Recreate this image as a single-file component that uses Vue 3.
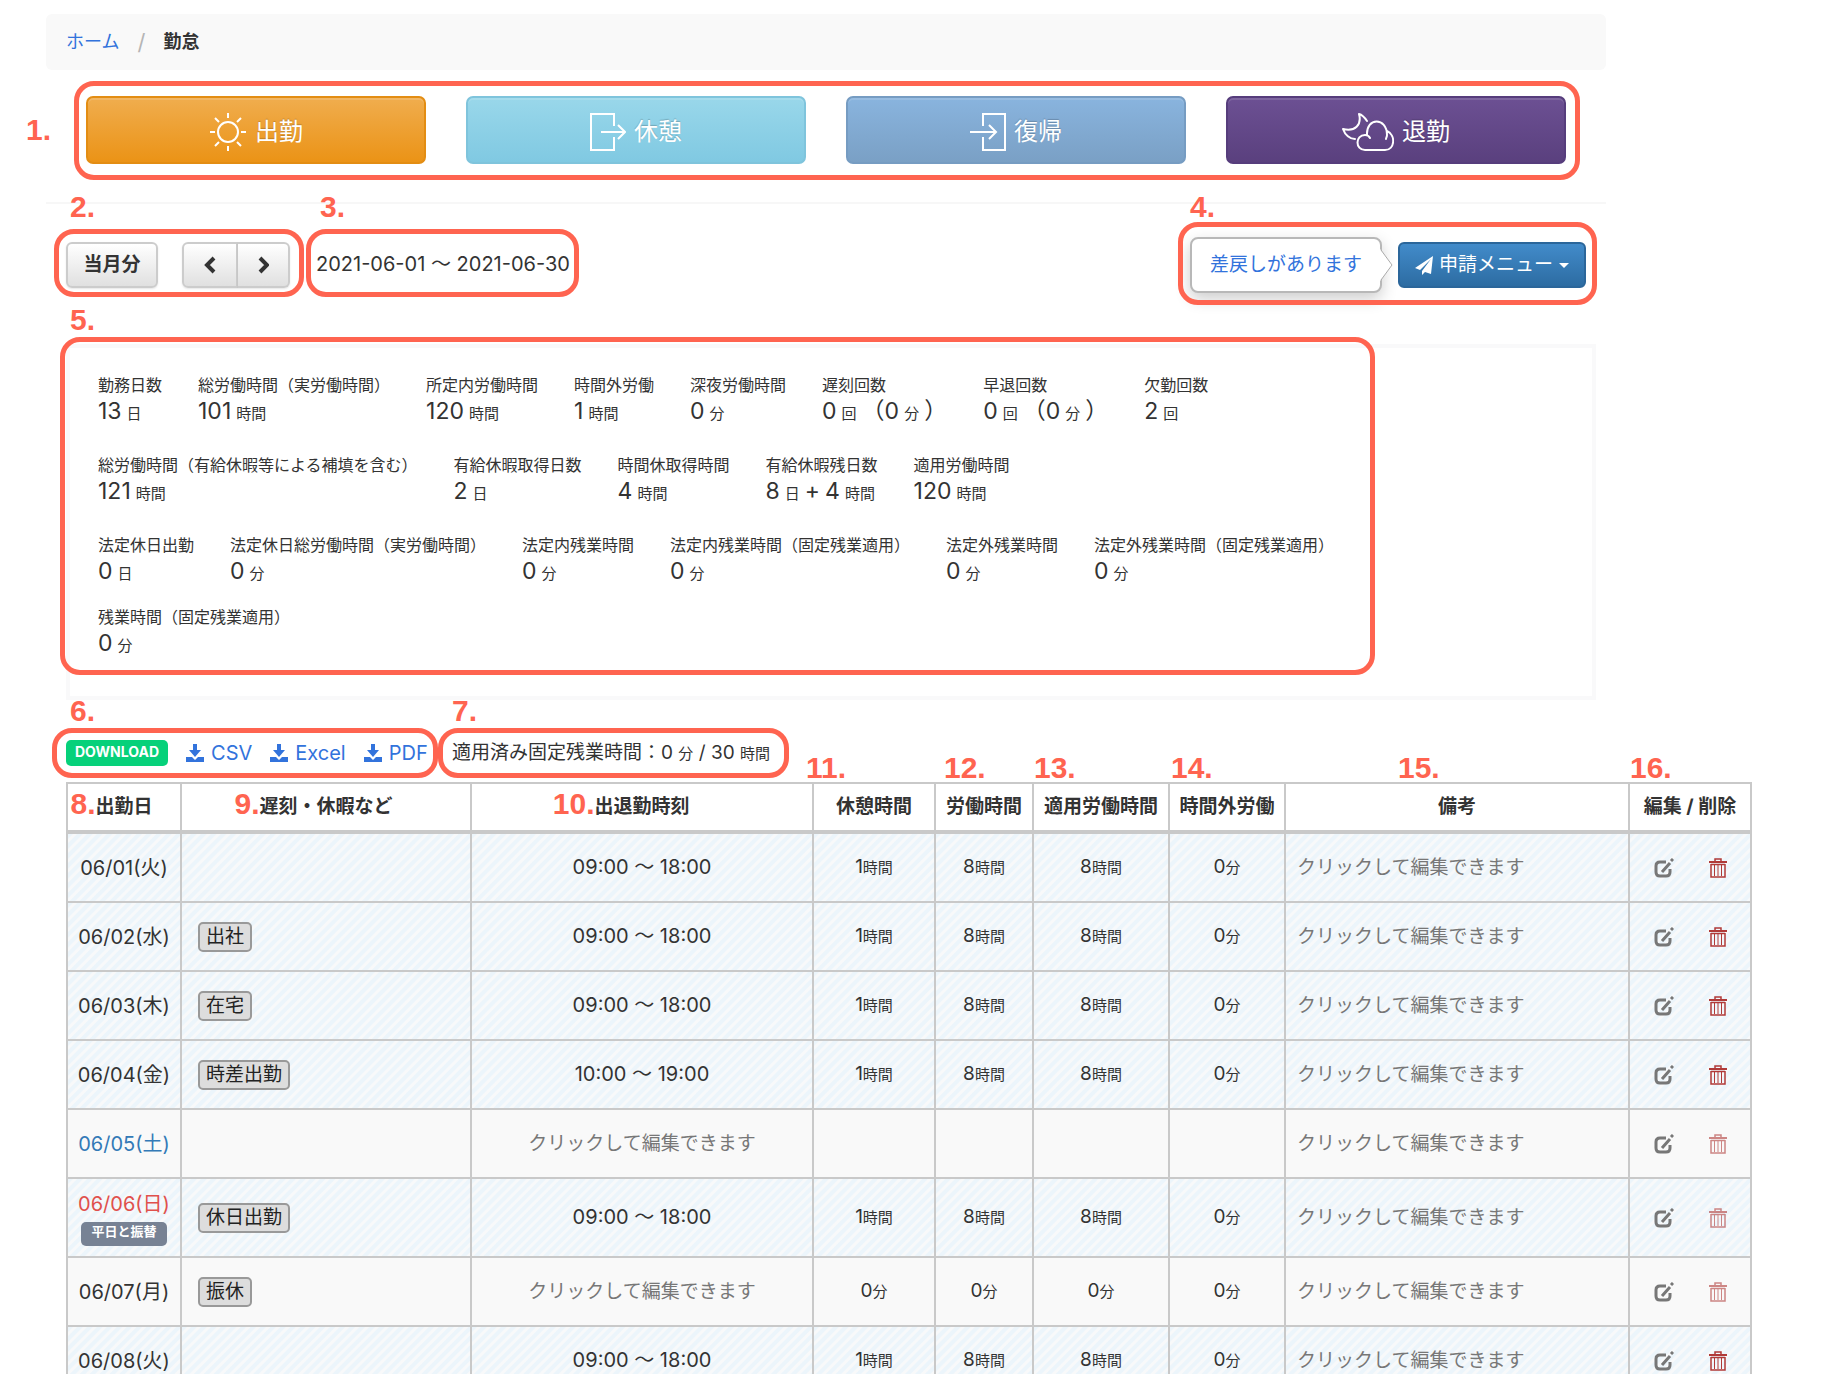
<script setup>
const punches = [
  { key: 'in', label: '出勤' },
  { key: 'break', label: '休憩' },
  { key: 'back', label: '復帰' },
  { key: 'out', label: '退勤' },
]

const n = (v) => ({ t: 'n', v })
const u = (v) => ({ t: 'u', v })

const statGroups = [
  [
    { label: '勤務日数', value: [n('13'), u('日')] },
    { label: '総労働時間（実労働時間）', value: [n('101'), u('時間')] },
    { label: '所定内労働時間', value: [n('120'), u('時間')] },
    { label: '時間外労働', value: [n('1'), u('時間')] },
    { label: '深夜労働時間', value: [n('0'), u('分')] },
    { label: '遅刻回数', value: [n('0'), u('回'), n('（0'), u('分'), n('）')] },
    { label: '早退回数', value: [n('0'), u('回'), n('（0'), u('分'), n('）')] },
    { label: '欠勤回数', value: [n('2'), u('回')] },
  ],
  [
    { label: '総労働時間（有給休暇等による補填を含む）', value: [n('121'), u('時間')] },
    { label: '有給休暇取得日数', value: [n('2'), u('日')] },
    { label: '時間休取得時間', value: [n('4'), u('時間')] },
    { label: '有給休暇残日数', value: [n('8'), u('日'), n('+'), n('4'), u('時間')] },
    { label: '適用労働時間', value: [n('120'), u('時間')] },
  ],
  [
    { label: '法定休日出勤', value: [n('0'), u('日')] },
    { label: '法定休日総労働時間（実労働時間）', value: [n('0'), u('分')] },
    { label: '法定内残業時間', value: [n('0'), u('分')] },
    { label: '法定内残業時間（固定残業適用）', value: [n('0'), u('分')] },
    { label: '法定外残業時間', value: [n('0'), u('分')] },
    { label: '法定外残業時間（固定残業適用）', value: [n('0'), u('分')] },
    { label: '残業時間（固定残業適用）', value: [n('0'), u('分')] },
  ],
]

const downloads = ['CSV', 'Excel', 'PDF']

const columns = [
  { label: '出勤日', mark: '8.', inline: true },
  { label: '遅刻・休暇など', mark: '9.', inline: true },
  { label: '出退勤時刻', mark: '10.', inline: true },
  { label: '休憩時間', mark: '11.', left: -8 },
  { label: '労働時間', mark: '12.', left: 8 },
  { label: '適用労働時間', mark: '13.', left: 0 },
  { label: '時間外労働', mark: '14.', left: 1 },
  { label: '備考', mark: '15.', left: 112 },
  { label: '編集 / 削除', mark: '16.', left: 0 },
]

const worked = [['1', '時間'], ['8', '時間'], ['8', '時間'], ['0', '分']]
const zero = [['0', '分'], ['0', '分'], ['0', '分'], ['0', '分']]
const blank = [null, null, null, null]

const days = [
  { date: '06/01(火)', time: '09:00 ～ 18:00', hours: worked, on: true },
  { date: '06/02(水)', tag: '出社', time: '09:00 ～ 18:00', hours: worked, on: true },
  { date: '06/03(木)', tag: '在宅', time: '09:00 ～ 18:00', hours: worked, on: true },
  { date: '06/04(金)', tag: '時差出勤', time: '10:00 ～ 19:00', hours: worked, on: true },
  { date: '06/05(土)', kind: 'sat', hours: blank, locked: true },
  { date: '06/06(日)', kind: 'sun', note: '平日と振替', tag: '休日出勤', time: '09:00 ～ 18:00', hours: worked, on: true, locked: true },
  { date: '06/07(月)', tag: '振休', hours: zero, locked: true },
  { date: '06/08(火)', time: '09:00 ～ 18:00', hours: worked, on: true },
]
</script>

<template>
  <main class="page">
    <div class="top">
      <nav class="breadcrumb">
        <a href="#">ホーム</a>
        <span class="slash">/</span>
        <strong>勤怠</strong>
      </nav>

      <div class="punches">
        <button v-for="p in punches" :key="p.key" type="button" class="punch" :class="p.key">
          <svg v-if="p.key === 'in'" width="38" height="38" viewBox="0 0 38 38" fill="none" stroke="#fff" stroke-width="2">
            <circle cx="19" cy="19" r="10" />
            <path d="M19 0v5M19 33v5M1 19h5M32 19h5M6 5l4 4M32 5l-4 4M6 33l4-4M32 33l-4-4" />
          </svg>
          <svg v-else-if="p.key === 'break'" width="36" height="38" viewBox="0 0 36 38" fill="none" stroke="#fff" stroke-width="2">
            <path d="M24 13V1H1v36h23V24M11 19h24M28 12l7 7l-7 7" />
          </svg>
          <svg v-else-if="p.key === 'back'" width="36" height="38" viewBox="0 0 36 38" fill="none" stroke="#fff" stroke-width="2">
            <path d="M13 13V1h22v36H13V24M0 19h26M19 12l7 7l-7 7" />
          </svg>
          <svg v-else width="52" height="38" viewBox="0 0 52 38" fill="none" stroke="#fff" stroke-width="2" stroke-linecap="round" stroke-linejoin="round">
            <path d="M25 8C23 5 21 2 17 1C20 12 13 19 1 16C3 22 8 26 13 26" />
            <path d="M23 37C13 37 13 22 23 22C25 22 27 23 28 25M25 22C24 4 45 4 45 22C45 24 44 25 44 26M45 18C54 22 53 37 43 37H23" />
          </svg>
          {{ p.label }}
        </button>
        <i class="ring ring-punch"></i>
        <b class="mark mark-1">1.</b>
      </div>

      <hr />

      <div class="toolbar">
        <div class="period">
          <button type="button" class="btn month">当月分</button>
          <div class="group">
            <button type="button" class="btn" aria-label="前の月">
              <svg width="12" height="18" viewBox="0 0 12 18"><path d="M10 2L3 9l7 7" fill="none" stroke="#333" stroke-width="4" /></svg>
            </button>
            <button type="button" class="btn" aria-label="次の月">
              <svg width="12" height="18" viewBox="0 0 12 18"><path d="M3 2l7 7l-7 7" fill="none" stroke="#333" stroke-width="4" /></svg>
            </button>
          </div>
          <i class="ring ring-period"></i>
          <b class="mark">2.</b>
        </div>
        <div class="range">
          2021-06-01 ～ 2021-06-30
          <i class="ring ring-range"></i>
          <b class="mark">3.</b>
        </div>
        <div class="requests">
          <div class="popover">
            <a href="#">差戻しがあります</a>
            <svg class="tip" width="14" height="32" viewBox="0 0 14 32"><path d="M0 0v32L13 16z" fill="#fff" /><path d="M1 1l11 15L1 31" fill="none" stroke="#aaa" stroke-width="1" /></svg>
          </div>
          <button type="button" class="menu">
            <svg width="18" height="19" viewBox="0 0 18 19" fill="#fff"><path d="M18 0L0 12l5 2L16 3L7 15v4l3-3l6 2z" /></svg>
            申請メニュー
            <span class="caret"></span>
          </button>
          <i class="ring ring-requests"></i>
          <b class="mark mark-4">4.</b>
        </div>
      </div>

      <section class="panel">
        <dl v-for="(g, gi) in statGroups" :key="gi" class="stats">
          <div v-for="s in g" :key="s.label" class="stat">
            <dt>{{ s.label }}</dt>
            <dd><span v-for="(p, i) in s.value" :key="i" :class="{ unit: p.t === 'u' }">{{ p.v }}</span></dd>
          </div>
        </dl>
        <i class="ring ring-panel"></i>
        <b class="mark mark-5">5.</b>
      </section>
    </div>

    <div class="sheet">
      <div class="exports">
        <div class="files">
          <span class="badge">DOWNLOAD</span>
          <a v-for="d in downloads" :key="d" href="#">
            <svg width="18" height="18" viewBox="0 0 18 18" fill="#3273dc"><path d="M7 0h4v6h4l-6 7l-6-7h4zM0 13h6l3 3l3-3h6v5H0z" /></svg>
            {{ d }}
          </a>
          <i class="ring ring-files"></i>
          <b class="mark">6.</b>
        </div>
        <div class="overtime">
          適用済み固定残業時間：0 <span class="unit">分</span> / 30 <span class="unit">時間</span>
          <i class="ring ring-overtime"></i>
          <b class="mark">7.</b>
        </div>
      </div>

      <table>
        <colgroup>
          <col class="c-date" /><col class="c-tag" /><col class="c-time" /><col class="c-rest" /><col class="c-work" />
          <col class="c-applied" /><col class="c-over" /><col /><col class="c-act" />
        </colgroup>
        <thead>
          <tr>
            <th v-for="c in columns" :key="c.label" scope="col">
              <span class="head"><b v-if="c.inline" class="mark lead">{{ c.mark }}</b>{{ c.label }}</span>
              <b v-if="!c.inline" class="mark above" :style="{ left: c.left + 'px' }">{{ c.mark }}</b>
            </th>
          </tr>
        </thead>
        <tbody>
          <tr v-for="d in days" :key="d.date" :class="{ on: d.on, tall: d.note }">
            <td class="clock">
              <span :class="d.kind">{{ d.date }}</span>
              <span v-if="d.note" class="swap">{{ d.note }}</span>
            </td>
            <td class="tags"><span v-if="d.tag" class="tag">{{ d.tag }}</span></td>
            <td>
              <span v-if="d.time" class="clock">{{ d.time }}</span>
              <button v-else type="button" class="hint">クリックして編集できます</button>
            </td>
            <td v-for="(h, i) in d.hours" :key="i"><template v-if="h">{{ h[0] }}<span class="unit">{{ h[1] }}</span></template></td>
            <td class="memo"><button type="button" class="hint">クリックして編集できます</button></td>
            <td>
              <div class="acts">
                <button type="button" aria-label="編集">
                  <svg width="20" height="20" viewBox="0 0 20 20" fill="none" stroke="#777" stroke-width="3">
                    <path d="M12 4H6Q2 4 2 8v6q0 4 4 4h6q4 0 4-4v-3" /><path d="M8 14l8-9M17 3l2-2" />
                  </svg>
                </button>
                <button type="button" aria-label="削除" :class="{ dim: d.locked }">
                  <svg width="18" height="20" viewBox="0 0 18 20" fill="none" stroke="#b03a38">
                    <path d="M0 4h18" stroke-width="2" /><path d="M6 3V1h6v2M2 6v13h14V6M2 6.5h14" stroke-width="1.5" /><path d="M5.5 7v11M9 7v11M12.5 7v11" stroke-width="1" />
                  </svg>
                </button>
              </div>
            </td>
          </tr>
        </tbody>
      </table>
    </div>
  </main>
</template>

<style>
body {
  background: #fff;
}
</style>

<style scoped>
.page {
  box-sizing: border-box;
  height: 100vh;
  overflow: hidden;
  padding: 14px 70px 0 46px;
  font-family: Inter, "Noto Sans CJK JP", sans-serif;
  font-size: 19px;
  line-height: 28px;
  color: #333;
}
button {
  font: inherit;
  color: inherit;
  cursor: pointer;
}
a {
  color: #3273dc;
  text-decoration: none;
}
.top {
  margin-right: 146px;
}
.breadcrumb {
  display: flex;
  align-items: center;
  gap: 18px;
  height: 56px;
  padding: 0 20px;
  border-radius: 6px;
  background: #f9f9f9;
  font-size: 18px;
}
.slash {
  color: #b5b5b5;
  font-size: 22px;
}

/* callout rings and numbers */
.ring {
  position: absolute;
  border: 5px solid #ff6450;
  border-radius: 20px;
  pointer-events: none;
}
.mark {
  position: absolute;
  font: bold 30px/30px "Liberation Sans", sans-serif;
  color: #ff6450;
  left: 4px;
  top: -52px;
}

.punches {
  position: relative;
  display: grid;
  grid-template-columns: repeat(4, 1fr);
  gap: 40px;
  margin: 26px 40px 0;
}
.punch {
  display: flex;
  align-items: center;
  justify-content: center;
  gap: 8px;
  height: 68px;
  padding: 3px 0 0;
  border: 2px solid;
  border-radius: 7px;
  color: #fff;
  font-size: 24px;
  text-shadow: 0 -1px 1px rgba(0, 0, 0, 0.2);
  box-shadow: inset 0 2px 0 rgba(255, 255, 255, 0.13);
}
.in {
  background: linear-gradient(#f0ad4e, #eb9316);
  border-color: #e38d13;
}
.break {
  background: linear-gradient(#99d7ea, #80c9e2);
  border-color: #7fc4dc;
}
.back {
  background: linear-gradient(#89b4de, #7aa0c5);
  border-color: #769cc2;
}
.out {
  background: linear-gradient(#6c5093, #5a407e);
  border-color: #563d7c;
}
.ring-punch {
  inset: -15px -14px -16px -12px;
}
.mark-1 {
  left: -60px;
  top: 19px;
}
hr {
  height: 2px;
  margin: 38px 0;
  border: 0;
  background: #f7f7f7;
}

.toolbar {
  display: flex;
  align-items: center;
  height: 46px;
  margin: 0 20px;
}
.period {
  position: relative;
  display: flex;
  gap: 24px;
}
.group {
  display: flex;
}
.btn {
  display: flex;
  align-items: center;
  justify-content: center;
  width: 52px;
  height: 46px;
  padding: 0;
  border: 2px solid #ccc;
  border-radius: 6px;
  background: linear-gradient(#fff, #e0e0e0);
  box-shadow: 0 1px 2px rgba(0, 0, 0, 0.1);
}
.month {
  width: 92px;
  font-weight: bold;
}
.group .btn:first-child {
  width: 56px;
  border-radius: 6px 0 0 6px;
}
.group .btn:last-child {
  border-left: 0;
  border-radius: 0 6px 6px 0;
}
.period > .mark {
  top: -50px;
}
.ring-period {
  inset: -13px -14px -9px -12px;
}
.range {
  position: relative;
  margin-left: 26px;
  padding-bottom: 2px;
  font-size: 20px;
  white-space: nowrap;
}
.ring-range {
  inset: -21px -9px -17px -10px;
}
.range .mark {
  top: -58px;
}
.requests {
  position: relative;
  display: flex;
  align-items: center;
  gap: 16px;
  margin-left: auto;
}
.popover {
  position: relative;
  box-sizing: border-box;
  height: 56px;
  padding: 12px 18px;
  border: 2px solid #b8b8b8;
  border-radius: 8px;
  background: #fff;
  box-shadow: 0 6px 16px rgba(0, 0, 0, 0.2);
  white-space: nowrap;
}
.tip {
  position: absolute;
  left: 100%;
  top: 10px;
}
.menu {
  display: flex;
  align-items: center;
  justify-content: center;
  gap: 6px;
  width: 188px;
  height: 46px;
  padding: 0;
  border: 2px solid #2b669a;
  border-radius: 6px;
  background: linear-gradient(#428bca, #2d6ca2);
  color: #fff;
  white-space: nowrap;
}
.caret {
  border: 5px solid transparent;
  border-top-color: #fff;
  border-bottom: 0;
}
.ring-requests {
  inset: -15px -11px -12px -12px;
}
.mark-4 {
  left: 0;
  top: -45px;
}

.panel {
  position: relative;
  box-sizing: border-box;
  margin: 56px 10px 0 20px;
  padding: 24px 100px 12px 28px;
  border: 4px solid #f9f9fa;
}
.stats {
  display: flex;
  flex-wrap: wrap;
  gap: 20px 36px;
  margin: 0 0 28px;
}
.stat dt {
  font-size: 16px;
  line-height: 26px;
  white-space: nowrap;
}
.stat dd {
  display: flex;
  align-items: baseline;
  gap: 5px;
  height: 26px;
  margin: 0;
  font-size: 23px;
  line-height: 26px;
  white-space: nowrap;
}
.unit {
  font-size: 15px;
}
.ring-panel {
  inset: -11px 217px 21px -10px;
}
.mark-5 {
  left: 0;
  top: -43px;
}

.sheet {
  margin: 40px 0 0 20px;
}
.exports {
  display: flex;
  align-items: center;
  height: 26px;
}
.files {
  position: relative;
  display: flex;
  align-items: center;
  gap: 18px;
  width: 386px;
  height: 26px;
}
.files a {
  display: flex;
  align-items: center;
  gap: 7px;
  font-size: 20px;
}
.badge {
  height: 26px;
  padding: 0 9px;
  border-radius: 5px;
  background: #06d17a;
  color: #fff;
  font-size: 14px;
  line-height: 24px;
  font-weight: bold;
}
.files .mark,
.overtime .mark {
  top: -44px;
}
.overtime .mark {
  left: 0;
}
.ring-files {
  inset: -12px 14px -12px -14px;
}
.overtime {
  position: relative;
  height: 26px;
  line-height: 26px;
  white-space: nowrap;
}
.ring-overtime {
  inset: -12px -19px -12px -14px;
}

table {
  width: 100%;
  margin-top: 16px;
  border-collapse: collapse;
  table-layout: fixed;
  text-align: center;
}
.c-date {
  width: 114px;
}
.c-tag {
  width: 290px;
}
.c-time {
  width: 342px;
}
.c-rest,
.c-act {
  width: 122px;
}
.c-work {
  width: 98px;
}
.c-applied {
  width: 136px;
}
.c-over {
  width: 116px;
}
th,
td {
  padding: 0;
  border: 2px solid #c9c9c9;
  white-space: nowrap;
}
th {
  position: relative;
  height: 46px;
  border-bottom-width: 4px;
}
td {
  height: 67px;
  background: #f9f9f9;
}
.tall td {
  height: 77px;
}
.on td {
  background: repeating-linear-gradient(135deg, #ecf5fb 0 3px, #f8f9fa 4px 6px, #ecf5fb 7px);
}
.head {
  position: relative;
}
.lead {
  left: auto;
  right: 100%;
  top: -6px;
}
.above {
  top: -31px;
}
.clock {
  font-size: 20px;
}
.sat {
  color: #337ab7;
}
.sun {
  color: #e0504c;
}
.swap {
  display: block;
  width: 86px;
  height: 24px;
  margin: 4px auto 0;
  border-radius: 5px;
  background: #778294;
  color: #fff;
  font-size: 13px;
  line-height: 19px;
  font-weight: bold;
}
.tags {
  padding-left: 16px;
  text-align: left;
}
.tag {
  display: inline-block;
  box-sizing: border-box;
  height: 30px;
  padding: 0 6px;
  border: 2px solid #999;
  border-radius: 5px;
  background: #ddd;
  color: #222;
  line-height: 26px;
  vertical-align: middle;
}
.hint {
  padding: 0;
  border: 0;
  background: none;
  color: #777;
}
.memo {
  padding-left: 11px;
  text-align: left;
}
.acts {
  display: flex;
  justify-content: center;
  gap: 35px;
}
.acts button {
  display: flex;
  padding: 0;
  border: 0;
  background: none;
}
.dim {
  opacity: 0.6;
}
</style>
